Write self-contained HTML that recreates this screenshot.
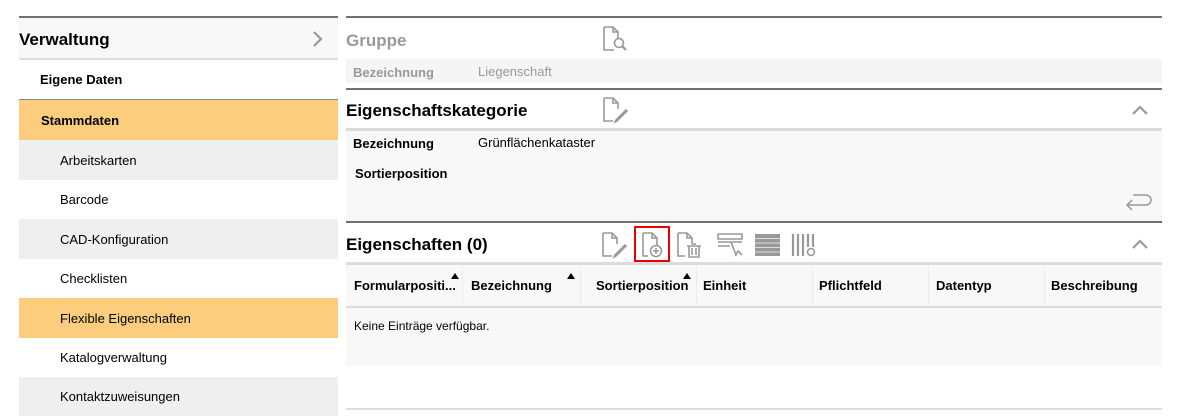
<!DOCTYPE html>
<html><head><meta charset="utf-8"><style>
*{margin:0;padding:0;box-sizing:border-box}
body{width:1184px;height:417px;background:#fff;font-family:"Liberation Sans",Arial,sans-serif;position:relative;overflow:hidden;color:#000}
.a{position:absolute}
.side div.it{position:absolute;left:19px;width:319px;font-size:13px;padding-left:41px;display:flex;align-items:center}
.hd{font-size:17px;font-weight:bold}
.th{position:absolute;top:265px;height:41px;font-size:13px;font-weight:bold;display:flex;align-items:center;padding-left:8px;border-left:1px solid #ececec}
.tri{position:absolute;top:8px;width:0;height:0;border-left:4px solid transparent;border-right:4px solid transparent;border-bottom:6px solid #000}
</style></head><body>
<div class="a" style="left:19px;top:16px;width:319px;height:2px;background:#707070"></div>
<div class="a" style="left:19px;top:18px;width:319px;height:40px;background:#f8f8f8"></div>
<div class="a hd" style="left:19px;top:30px">Verwaltung</div>
<svg class="a" style="left:311px;top:30px" width="14" height="18"><path d="M3 2 L10 9 L3 16" stroke="#999" stroke-width="2.2" fill="none"/></svg>
<div class="a" style="left:19px;top:58px;width:319px;height:2px;background:#dcdcdc"></div>
<div class="side">
<div class="it" style="top:60px;height:39px;background:#fff;font-weight:bold;padding-left:21px">Eigene Daten</div>
<div class="a" style="left:19px;top:99px;width:319px;height:1px;background:#888"></div>
<div class="it" style="top:100px;height:40px;background:#fccd7d;font-weight:bold;padding-left:22px">Stammdaten</div>
<div class="it" style="top:140px;height:40px;background:#efefef">Arbeitskarten</div>
<div class="it" style="top:180px;height:39px;background:#fff">Barcode</div>
<div class="it" style="top:219px;height:40px;background:#efefef">CAD-Konfiguration</div>
<div class="it" style="top:259px;height:39px;background:#fff">Checklisten</div>
<div class="it" style="top:298px;height:40px;background:#fccd7d">Flexible Eigenschaften</div>
<div class="it" style="top:338px;height:39px;background:#fff">Katalogverwaltung</div>
<div class="it" style="top:377px;height:39px;background:#efefef">Kontaktzuweisungen</div>
</div>
<div class="a" style="left:346px;top:16px;width:816px;height:2px;background:#707070"></div>
<div class="a hd" style="left:346px;top:31px;color:#999">Gruppe</div>
<svg class="a" style="left:602px;top:26px" width="26" height="26" fill="none" stroke="#999" stroke-width="1.6"><path d="M2 1 H11 L16 6 V13 M11 1 V6 H16 M2 1 V24 H12"/><circle cx="17" cy="17" r="4.5"/><path d="M20 20 L24 24" stroke-width="2.2"/></svg>
<div class="a" style="left:346px;top:59px;width:816px;height:24px;background:#f5f5f5"></div>
<div class="a" style="left:353px;top:65px;font-size:13px;font-weight:bold;color:#999">Bezeichnung</div>
<div class="a" style="left:478px;top:64px;font-size:13px;color:#999">Liegenschaft</div>
<div class="a" style="left:346px;top:88px;width:816px;height:2px;background:#707070"></div>
<div class="a hd" style="left:346px;top:101px">Eigenschaftskategorie</div>
<svg class="a" style="left:602px;top:97px" width="28" height="26" fill="none" stroke="#999" stroke-width="1.6"><path d="M2 1 H11 L16 6 V12 M11 1 V6 H16 M2 1 V24 H11"/><path d="M14 23 L13 25 L15 24 L25 14 L24 13 Z"/></svg>
<svg class="a" style="left:1131px;top:104px" width="18" height="12"><path d="M2 10 L9 3 L16 10" stroke="#999" stroke-width="2.2" fill="none"/></svg>
<div class="a" style="left:346px;top:128px;width:816px;height:3px;background:#dcdcdc"></div>
<div class="a" style="left:346px;top:131px;width:816px;height:90px;background:#f8f8f8"></div>
<div class="a" style="left:353px;top:136px;font-size:13px;font-weight:bold">Bezeichnung</div>
<div class="a" style="left:478px;top:135px;font-size:13px">Grünflächenkataster</div>
<div class="a" style="left:355px;top:166px;font-size:13px;font-weight:bold">Sortierposition</div>
<svg class="a" style="left:1124px;top:192px" width="28" height="22" fill="none" stroke="#999" stroke-width="1.5"><path d="M9 3 H22 A5 5 0 0 1 22 13 H3 M8 8 L3 13 L8 18"/></svg>
<div class="a" style="left:346px;top:221px;width:816px;height:2px;background:#707070"></div>
<div class="a hd" style="left:346px;top:235px">Eigenschaften (0)</div>
<svg class="a" style="left:600px;top:230px" width="230" height="30" fill="none" stroke="#999" stroke-width="1.6">
<path d="M3 3 H12 L17 8 V14 M12 3 V8 H17 M3 3 V26 H12"/><path d="M15 25 L14 27 L16 26 L26 16 L25 15 Z"/>
<path d="M43 3 H52 L57 8 V16 M52 3 V8 H57 M43 3 V26 H48"/><circle cx="56" cy="21" r="5.5"/><path d="M56 18 V24 M53 21 H59"/>
<path d="M78 3 H87 L92 8 V14 M87 3 V8 H92 M78 3 V26 H85"/><path d="M87 16 H101 M89 16 V27 H99 V16 M92 18 V25 M96 18 V25 M92 14 H96"/>
<path d="M118 4 H142 V9 H118 Z M118 12 H142 M118 16 H130"/><path d="M131 12 L136 25 L138 21 L142 25" />
<rect x="155" y="4" width="25" height="22" fill="#999" stroke="none"/><path d="M155 8.5 H180 M155 13 H180 M155 17.5 H180 M155 22 H180" stroke="#ddd" stroke-width="1"/>
<path d="M193 4 V26 M198 4 V26 M203 4 V26 M208 4 V17 M213 4 V17" stroke-width="2.2"/><circle cx="211" cy="22" r="3.5"/>
</svg>
<div class="a" style="left:634px;top:226px;width:36px;height:36px;border:2px solid #e00"></div>
<svg class="a" style="left:1131px;top:238px" width="18" height="12"><path d="M2 10 L9 3 L16 10" stroke="#999" stroke-width="2.2" fill="none"/></svg>
<div class="a" style="left:346px;top:262px;width:816px;height:3px;background:#dcdcdc"></div>
<div class="a" style="left:346px;top:265px;width:816px;height:41px;background:#f8f8f8"></div>
<div class="th" style="left:346px;width:116px;border-left:none">Formularpositi...<span class="tri" style="left:105px"></span></div>
<div class="th" style="left:462px;width:118px">Bezeichnung<span class="tri" style="left:104px"></span></div>
<div class="th" style="left:580px;width:116px;padding-left:15px">Sortierposition<span class="tri" style="left:102px"></span></div>
<div class="th" style="left:696px;width:116px;padding-left:6px">Einheit</div>
<div class="th" style="left:812px;width:116px;padding-left:6px">Pflichtfeld</div>
<div class="th" style="left:928px;width:116px;padding-left:7px">Datentyp</div>
<div class="th" style="left:1044px;width:118px;padding-left:6px">Beschreibung</div>
<div class="a" style="left:346px;top:306px;width:816px;height:2px;background:#dcdcdc"></div>
<div class="a" style="left:346px;top:308px;width:816px;height:58px;background:#f8f8f8"></div>
<div class="a" style="left:354px;top:319px;font-size:12px">Keine Einträge verfügbar.</div>
<div class="a" style="left:346px;top:408px;width:816px;height:2px;background:#dcdcdc"></div>
</body></html>
